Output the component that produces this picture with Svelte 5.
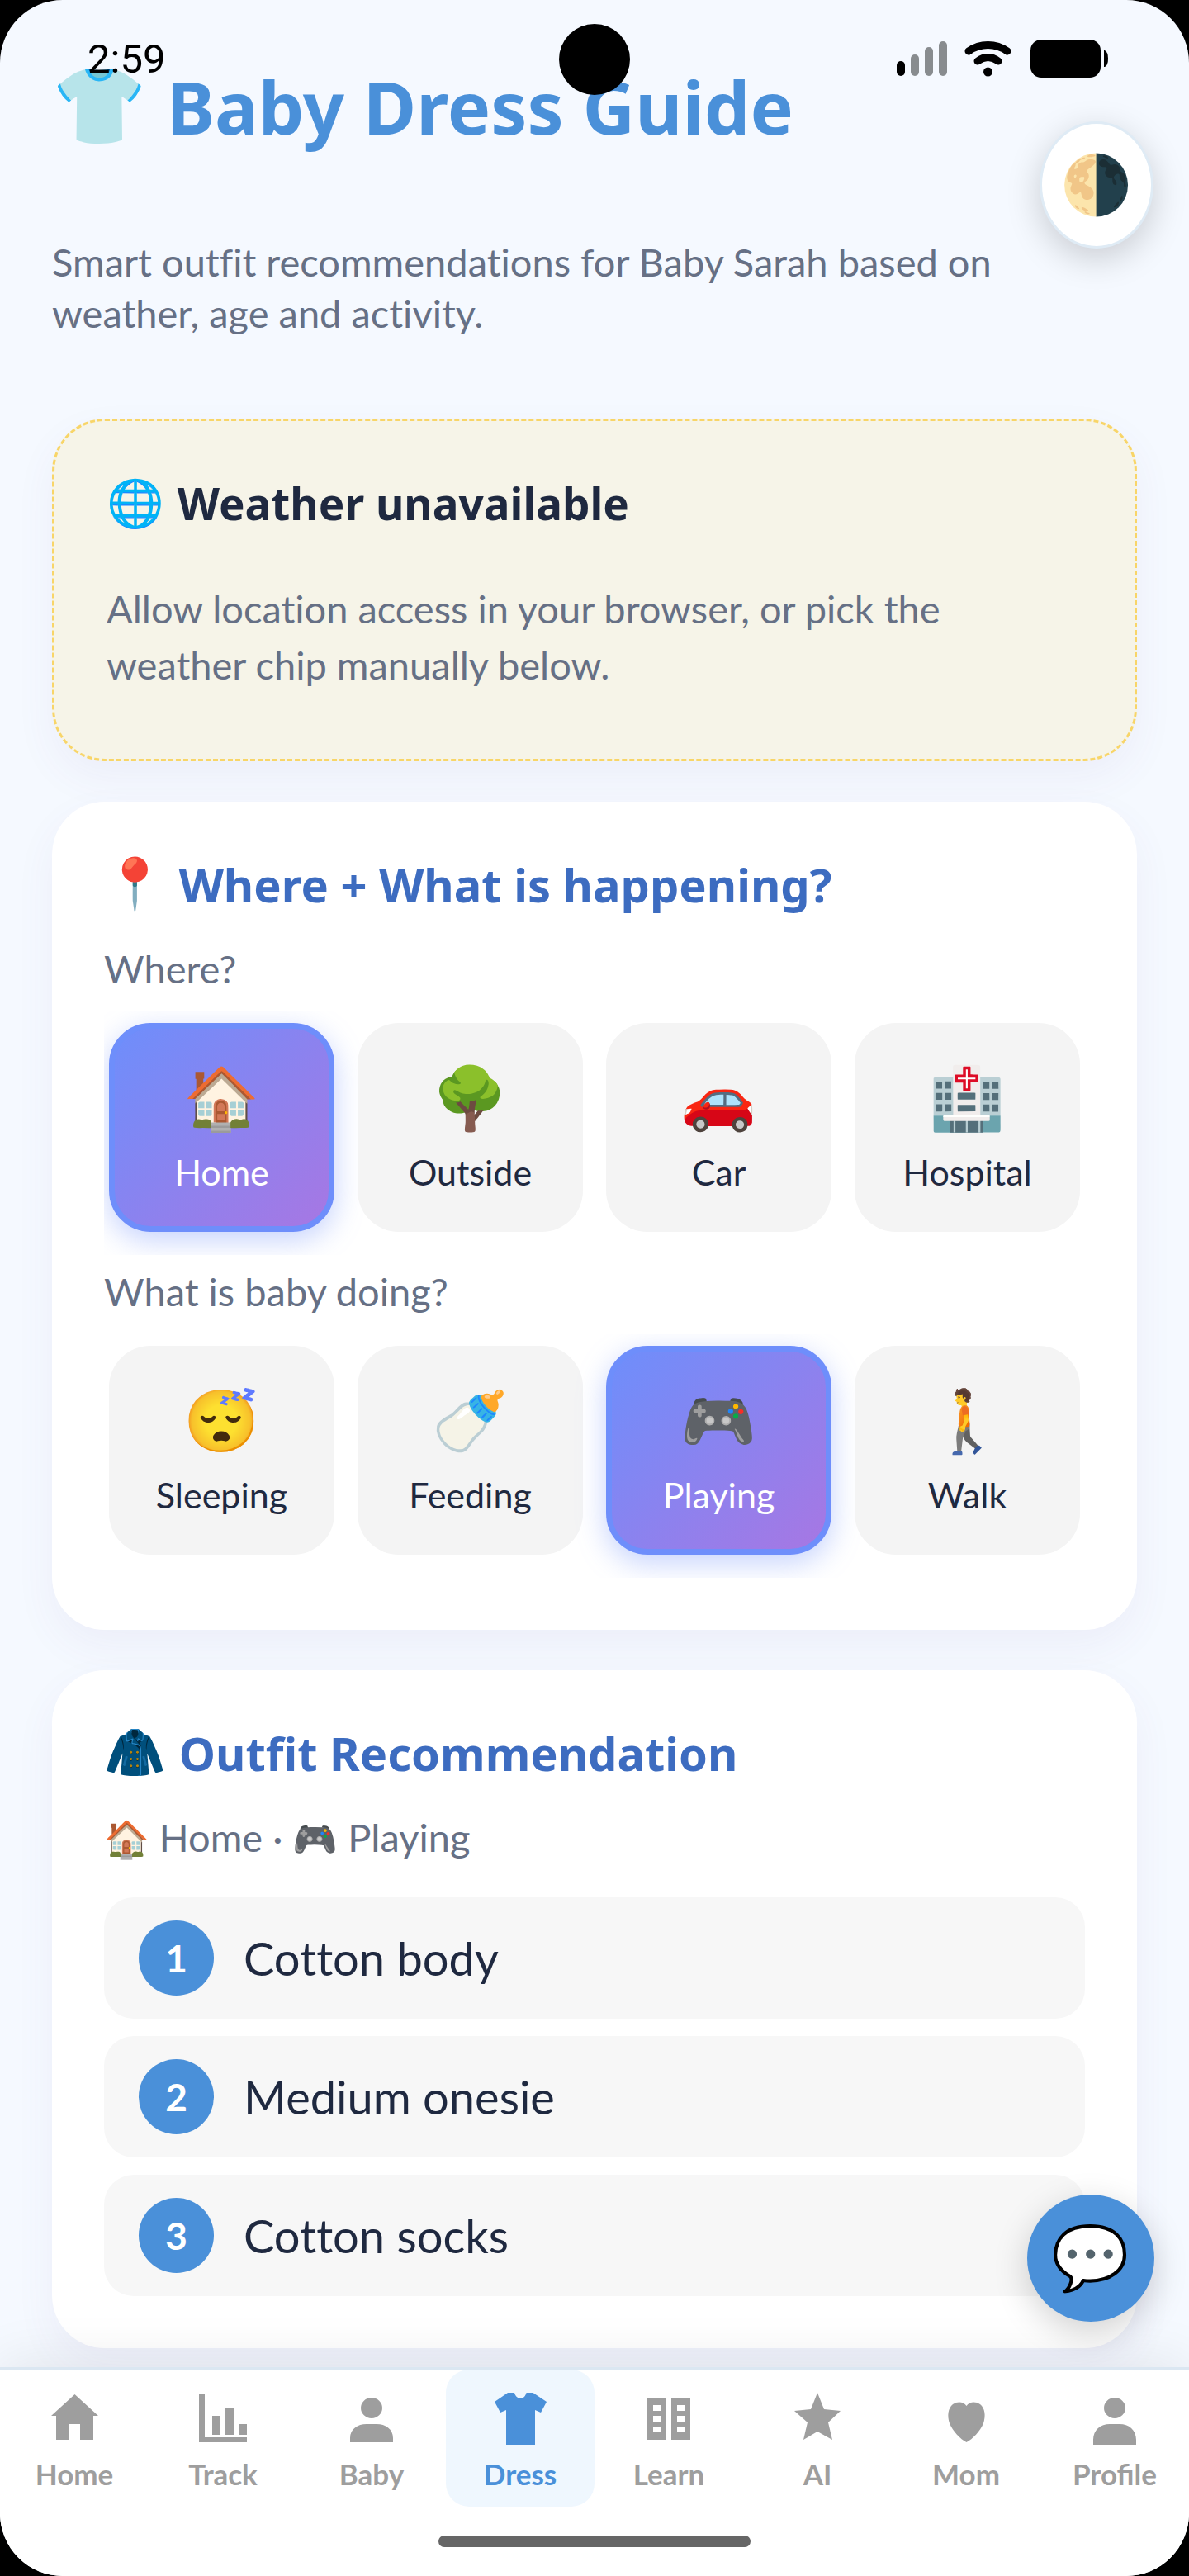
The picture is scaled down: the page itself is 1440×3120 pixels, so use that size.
<script lang="ts">
    interface Option {
        emoji: string
        label: string
    }

    const places: Option[] = [
        { emoji: '🏠', label: 'Home' },
        { emoji: '🌳', label: 'Outside' },
        { emoji: '🚗', label: 'Car' },
        { emoji: '🏥', label: 'Hospital' },
    ]

    const activities: Option[] = [
        { emoji: '😴', label: 'Sleeping' },
        { emoji: '🍼', label: 'Feeding' },
        { emoji: '🎮', label: 'Playing' },
        { emoji: '🚶', label: 'Walk' },
    ]

    // Icon paths are drawn on a 72x72 grid.
    const tabs = [
        { label: 'Home', path: 'M36.5 6L8 32h6v29h16V42h13v19h16V32h6z' },
        {
            label: 'Track',
            path: 'M7 6h7v52h51v6H7zM23 32h10v23H23zM39 23h10v32H39zM55 42h10v13H55z',
        },
        {
            label: 'Baby',
            path: 'M36 10a13 12.5 0 1 1 0 25a13 12.5 0 1 1 0-25zM10 64v-5c0-11 9-17 20-17h12c11 0 20 6 20 17v5z',
        },
        {
            label: 'Dress',
            path: 'M21 4h8c1 4 4 7 7.5 7s6-3 7-7h8L68 15l-7 13-7-3v42H19V25l-7 3L5 15z',
        },
        {
            label: 'Learn',
            path: 'M10 10h23v51H10zM39 10h23v51H39zM17 19v7h10v-7zM17 32v7h10v-7zM17 45v6h10v-6zM46 19v7h9v-7zM46 32v7h9v-7zM46 45v6h9v-6z',
        },
        {
            label: 'AI',
            path: 'M36 4l8 20 20 2-15 14 5 21-18-10-17 10 5-21L8 26l20-2z',
        },
        {
            label: 'Mom',
            path: 'M36.5 20C40 15 47 14 53 18c6 5 7 14 4 23-4 10-13 19-20.5 23C29 60 20 51 16 41c-3-9-2-18 4-23 6-4 13-3 16.5 2z',
        },
        {
            label: 'Profile',
            path: 'M36 10a13 12.5 0 1 1 0 25a13 12.5 0 1 1 0-25zM10 67v-6c0-12 9-19 20-19h12c11 0 20 7 20 19v6z',
        },
    ]

    let place = $state('Home')
    let activity = $state('Playing')
    let activeTab = $state('Dress')

    const outfit = ['Cotton body', 'Medium onesie', 'Cotton socks']

    function emojiFor(options: Option[], label: string): string {
        return options.find((o) => o.label === label)?.emoji ?? ''
    }
</script>

{#snippet chips(options: Option[], selected: string, pick: (label: string) => void)}
    <div class="chips">
        {#each options as option (option.label)}
            <button
                class="chip"
                class:selected={option.label === selected}
                aria-pressed={option.label === selected}
                onclick={() => pick(option.label)}
            >
                <span class="emoji">{option.emoji}</span>
                {option.label}
            </button>
        {/each}
    </div>
{/snippet}

<div class="screen">
    <div class="status">
        <span class="time">2:59</span>
        <span class="camera"></span>
        <svg class="signals" viewBox="0 0 256 48" aria-hidden="true">
            <rect x="0" y="26" width="10" height="18" rx="5" />
            <g fill="#888c8f">
                <rect x="17" y="18" width="10" height="26" rx="5" />
                <rect x="34" y="9" width="10" height="35" rx="5" />
                <rect x="51" y="2" width="10" height="42" rx="5" />
            </g>
            <g fill="none" stroke="#000" stroke-width="9" stroke-linecap="round">
                <path d="M87 14C101 4 120 4 134 14" />
                <path d="M98 26C106 20 115 20 123 26" />
            </g>
            <circle cx="110.5" cy="39" r="5.5" />
            <rect x="162" width="85" height="46" rx="13" />
            <path d="M251 13h1q4 2 4 10t-4 10h-1z" />
        </svg>
    </div>

    <main>
        <h1><span class="emoji">👕</span>Baby Dress Guide</h1>
        <p class="intro">
            Smart outfit recommendations for Baby Sarah based on weather, age and activity.
        </p>

        <section class="card notice">
            <h2><span class="emoji">🌐</span>Weather unavailable</h2>
            <p>
                Allow location access in your browser, or pick the weather chip manually
                below.
            </p>
        </section>

        <section class="card">
            <h2><span class="emoji">📍</span>Where + What is happening?</h2>
            <p class="hint">Where?</p>
            {@render chips(places, place, (label) => (place = label))}
            <p class="hint">What is baby doing?</p>
            {@render chips(activities, activity, (label) => (activity = label))}
        </section>

        <section class="card">
            <h2><span class="emoji">🧥</span>Outfit Recommendation</h2>
            <p class="hint">
                <span class="emoji">{emojiFor(places, place)}</span>
                {place} ·
                <span class="emoji">{emojiFor(activities, activity)}</span>
                {activity}
            </p>
            <ol>
                {#each outfit as item, i (item)}
                    <li><span class="num">{i + 1}</span>{item}</li>
                {/each}
            </ol>
        </section>
    </main>

    <nav>
        <div class="tabs">
            {#each tabs as tab (tab.label)}
                <button
                    class="tab"
                    class:active={tab.label === activeTab}
                    onclick={() => (activeTab = tab.label)}
                >
                    <svg viewBox="0 0 72 72" aria-hidden="true"><path d={tab.path} /></svg>
                    {tab.label}
                </button>
            {/each}
        </div>
        <span class="home-bar"></span>
    </nav>

    <button class="theme" aria-label="Toggle theme"><span class="emoji">🌗</span></button>
    <button class="chat" aria-label="Open chat"><span class="emoji">💬</span></button>
</div>

<style>
    :global(body) {
        margin: 0;
        background: #000;
    }
    .screen {
        position: relative;
        display: flex;
        flex-direction: column;
        min-height: 100vh;
        border-radius: 76px;
        overflow: hidden;
        background: #f5f9ff;
        color: #1f2940;
        font-family: Lato, sans-serif;
        font-variant-ligatures: none;
    }
    h1,
    h2,
    p,
    ol {
        margin: 0;
        padding: 0;
    }
    button {
        padding: 0;
        border: none;
        font-family: inherit;
        color: inherit;
        cursor: pointer;
    }
    .emoji {
        font-family: 'Noto Color Emoji', sans-serif;
    }

    /* System bar, floats over the scrolled page. */
    .status {
        position: absolute;
        z-index: 2;
        top: 0;
        left: 0;
        right: 0;
        display: grid;
        grid-template-columns: 1fr 86px 1fr;
        align-items: center;
        height: 144px;
        padding: 0 98px;
        color: #000;
    }
    .time {
        padding-left: 8px;
        font: 49px/56px Roboto, sans-serif;
    }
    .camera {
        height: 86px;
        border-radius: 50%;
        background: #000;
    }
    .signals {
        justify-self: end;
        width: 256px;
        height: 48px;
    }

    main {
        flex: 1;
        display: flex;
        flex-direction: column;
        gap: 49px;
        padding: 69px 63px 22px;
    }
    h1,
    h2 {
        display: flex;
        align-items: center;
        font-family: 'Noto Sans', sans-serif;
    }
    h1 {
        gap: 24px;
        color: #4a90d9;
        font-size: 88px;
        line-height: 120px;
    }
    h1 .emoji {
        font-size: 92px;
    }
    .intro,
    .hint,
    .notice p {
        color: #667085;
        font-size: 47px;
    }
    .intro {
        margin: 48px 0;
        padding-right: 120px;
        line-height: 62px;
    }

    .card {
        padding: 62px 63px 63px;
        border-radius: 64px;
        background: #fff;
        box-shadow: 0 20px 50px rgba(110, 70, 160, 0.06);
    }
    h2 {
        gap: 16px;
        padding-bottom: 20px;
        color: #3d6cc0;
        font-size: 56px;
        line-height: 76px;
    }
    h2 .emoji {
        font-size: 60px;
    }
    .hint {
        margin: 13px 0 21px;
        line-height: 62px;
    }
    .hint .emoji {
        font-size: 44px;
        line-height: 44px;
    }
    .notice {
        border: 3px dashed #f8d568;
        background: #f6f4e8;
    }
    .notice h2 {
        color: #1f2940;
        font-size: 53px;
    }
    .notice h2 .emoji {
        font-size: 56px;
    }
    .notice p {
        margin: 35px 0 17px;
        line-height: 68px;
    }

    .chips {
        display: grid;
        grid-template-columns: repeat(4, 1fr);
        gap: 28px;
        overflow: hidden;
        padding: 14px 6px 28px;
    }
    .chip {
        display: flex;
        flex-direction: column;
        align-items: center;
        justify-content: center;
        gap: 13px;
        height: 253px;
        box-sizing: border-box;
        border: 7px solid transparent;
        border-radius: 50px;
        background: #f4f4f4;
        font-size: 43px;
        line-height: 56px;
    }
    .chip .emoji {
        font-size: 74px;
        line-height: 96px;
    }
    .chip.selected {
        border-color: #6e8efb;
        background: linear-gradient(135deg, #6e8efb, #a777e3);
        box-shadow: 0 10px 35px rgba(110, 142, 251, 0.4);
        color: #fff;
    }

    ol {
        display: grid;
        gap: 21px;
        padding-top: 21px;
        list-style: none;
    }
    li {
        display: flex;
        align-items: center;
        gap: 36px;
        padding: 28px 42px;
        border-radius: 36px;
        background: #f7f7f7;
        font-size: 56px;
        line-height: 76px;
    }
    .num {
        display: grid;
        place-items: center;
        width: 91px;
        height: 91px;
        border-radius: 50%;
        background: #4a90d9;
        color: #fff;
        font-size: 46px;
        font-weight: 700;
    }

    nav {
        position: relative;
        display: flex;
        flex-direction: column;
        align-items: center;
        gap: 35px;
        padding-bottom: 35px;
        border-top: 3px solid #dbe7f2;
        background: #fff;
        box-shadow: 0 -8px 60px rgba(0, 0, 0, 0.08);
    }
    .tabs {
        display: grid;
        grid-template-columns: repeat(8, 1fr);
        width: 100%;
    }
    .tab {
        display: flex;
        flex-direction: column;
        align-items: center;
        gap: 8px;
        padding: 24px 0 18px;
        border-radius: 28px;
        background: none;
        color: #9e9e9e;
        font-size: 35px;
        font-weight: 700;
        line-height: 44px;
    }
    .tab svg {
        width: 72px;
        height: 72px;
        fill: currentColor;
        fill-rule: evenodd;
    }
    .tab.active {
        background: #eff7fe;
        color: #4a90d9;
    }
    .home-bar {
        width: 378px;
        height: 14px;
        border-radius: 7px;
        background: #666;
    }

    /* Floating buttons. */
    .theme,
    .chat {
        position: absolute;
        display: grid;
        place-items: center;
        box-sizing: border-box;
        border-radius: 50%;
        box-shadow: 0 12px 42px rgba(0, 0, 0, 0.18);
    }
    .theme {
        top: 147px;
        right: 43px;
        width: 138px;
        height: 154px;
        border: 3px solid #dfebf5;
        background: #fff;
        font-size: 70px;
    }
    .chat {
        right: 42px;
        bottom: 308px;
        width: 154px;
        height: 154px;
        background: #4a90d9;
        font-size: 76px;
    }
</style>
